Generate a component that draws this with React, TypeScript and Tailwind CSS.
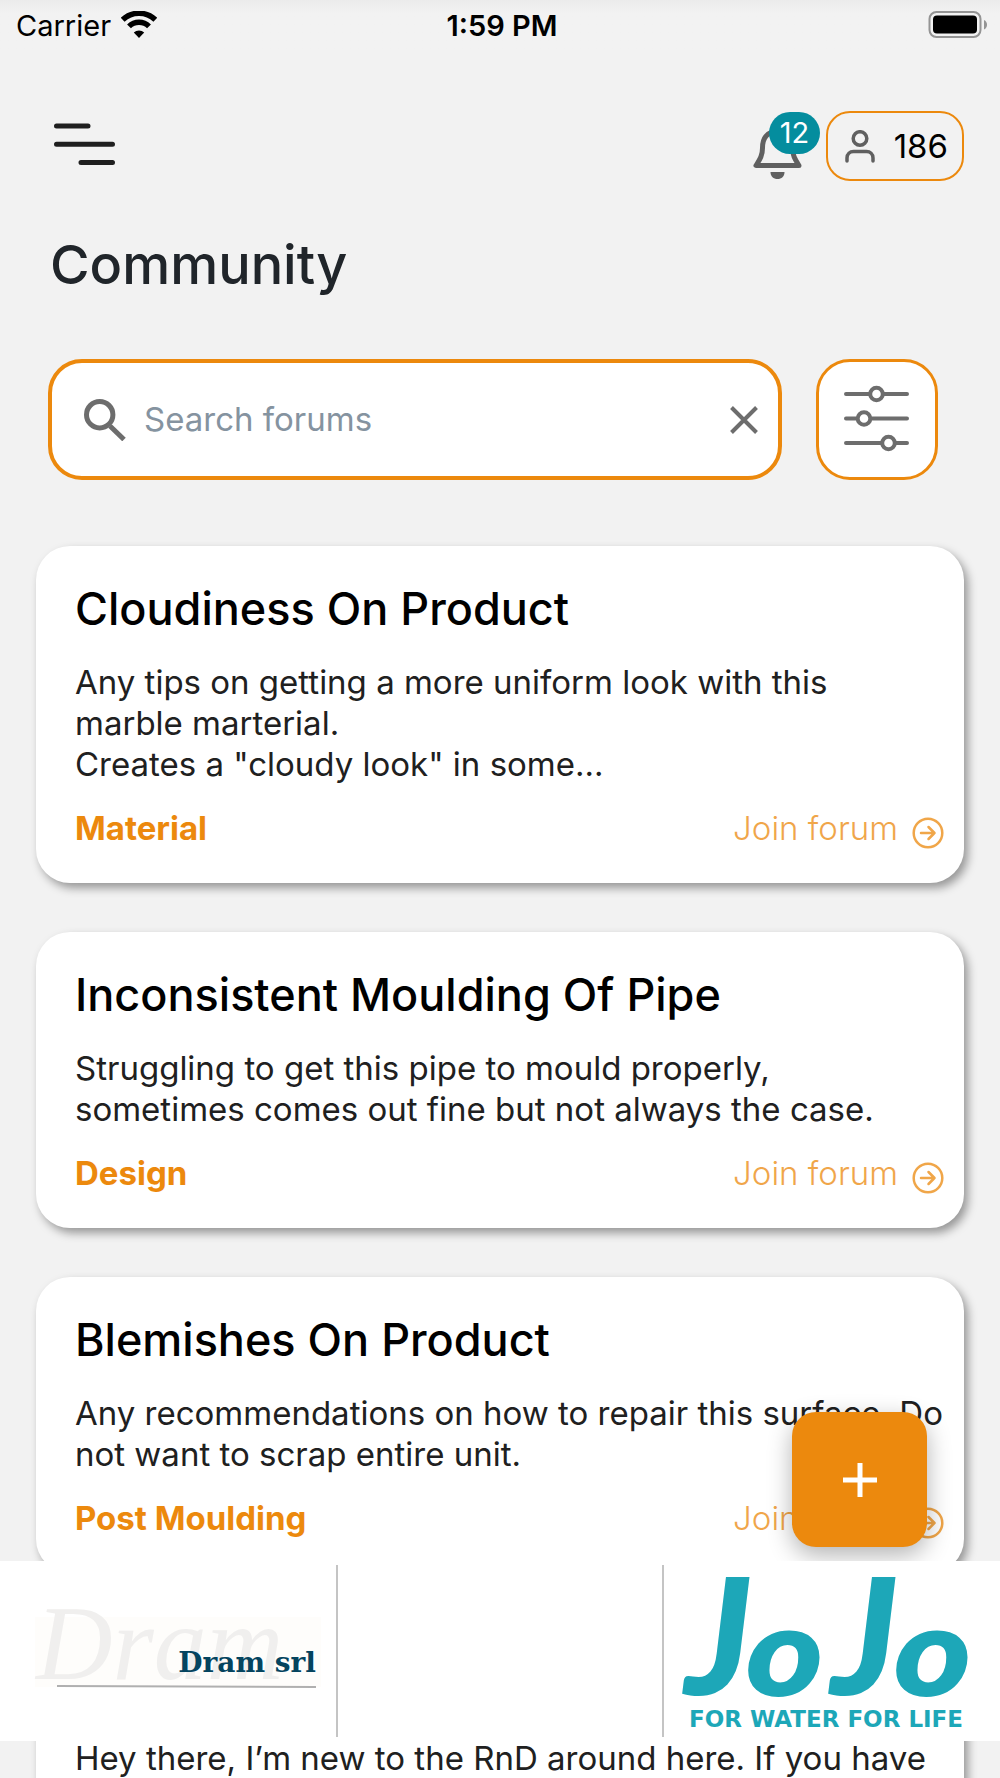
interface Forum {
  id: number;
  title?: string;
  body: string;
  category?: string;
}

const forums: Forum[] = [
  {
    id: 1,
    title: "Cloudiness On Product",
    body: 'Any tips on getting a more uniform look with this\nmarble marterial.\nCreates a "cloudy look" in some...',
    category: "Material",
  },
  {
    id: 2,
    title: "Inconsistent Moulding Of Pipe",
    body: "Struggling to get this pipe to mould properly, sometimes comes out fine but not always the case.",
    category: "Design",
  },
  {
    id: 3,
    title: "Blemishes On Product",
    body: "Any recommendations on how to repair this surface. Do not want to scrap entire unit.",
    category: "Post Moulding",
  },
  {
    id: 4,
    body: "Hey there, I’m new to the RnD around here. If you have",
  },
];

const StatusBar = () => {
  return (
    <div className="grid h-[52px] shrink-0 grid-cols-3 items-center bg-linear-to-b from-[#ebebeb] to-[#f2f2f2] to-25% pr-3 pl-4 text-[29px] leading-8 text-black">
      <div className="flex items-center gap-[10px]">
        <span>Carrier</span>
        <svg width="36" height="27" viewBox="0 0 36 27" className="-mt-1" aria-hidden="true">
          <path d="M1.700 8.800A23.500 23.500 0 0 1 34.300 8.800" fill="none" stroke="#000" strokeWidth="5.500" />
          <path d="M8 15.400A14.300 14.300 0 0 1 28 15.400" fill="none" stroke="#000" strokeWidth="5.500" />
          <path d="M18 27L12.800 21.600A7.600 7.600 0 0 1 23.200 21.600Z" fill="#000" />
        </svg>
      </div>
      <span className="text-center font-semibold">1:59 PM</span>
      <svg width="60" height="28" viewBox="0 0 60 28" className="-mt-0.5 justify-self-end" aria-hidden="true">
        <rect x="1.500" y="1" width="51" height="25" rx="7" fill="none" stroke="#949494" strokeWidth="2" />
        <rect x="5" y="4.500" width="44" height="18" rx="4" fill="#000" />
        <path d="M56 9c4 1.500 4 8 0 9.500z" fill="#949494" />
      </svg>
    </div>
  );
};

const Header = () => {
  return (
    <header className="mt-[59px] flex h-[70px] shrink-0 items-center justify-between pr-9 pl-[54px]">
      <button type="button" aria-label="Menu">
        <svg width="61" height="46" viewBox="0 0 61 46" fill="none" stroke="#1f1f1f" strokeWidth="5" strokeLinecap="round">
          <path d="M2.500 3H34M2.500 21.300H58.500M27 39.500H58.500" />
        </svg>
      </button>
      <div className="flex h-full items-center">
        <button type="button" aria-label="Notifications" className="relative mr-[24px] h-full w-[49px]">
          <svg width="49" height="50" viewBox="0 0 49 50" className="absolute bottom-[2px] left-0">
            <path
              d="M24.500 2.500C14 2.500 9.500 9 9.500 19C9.500 27 6.500 31 3 36.500H46C42.500 31 39.500 27 39.500 19C39.500 9 35 2.500 24.500 2.500Z"
              fill="none"
              stroke="#606060"
              strokeWidth="5"
              strokeLinejoin="round"
            />
            <path d="M17.500 43H31.500C31.500 47.500 28.500 50 24.500 50S17.500 47.500 17.500 43Z" fill="#606060" />
          </svg>
          <span className="absolute top-px left-4 flex h-[42px] w-[51px] items-center justify-center rounded-full bg-[#048d9e] text-[29px] leading-8 text-white">
            12
          </span>
        </button>
        <button
          type="button"
          className="flex h-full w-[138px] items-center justify-between rounded-3xl border-2 border-[#ec890d] pr-[14px] pl-[17px] text-[33px] leading-[41px] text-black"
        >
          <svg width="30" height="33" viewBox="0 0 30 33" fill="none" stroke="#606060" strokeWidth="3.500" strokeLinecap="round">
            <circle cx="15" cy="8.500" r="6.800" />
            <path d="M2 31V28C2 24 5 21.500 8.500 21.500H21.500C25 21.500 28 24 28 28V31" />
          </svg>
          <span>186</span>
        </button>
      </div>
    </header>
  );
};

const SearchRow = () => {
  return (
    <div className="mt-[62px] flex shrink-0 items-center gap-[34px] pr-[62px] pl-12">
      <div className="flex h-[121px] min-w-0 flex-1 items-center rounded-[34px] border-4 border-[#ec890d] bg-white pr-5 pl-8">
        <svg width="42" height="42" viewBox="0 0 42 42" fill="none" stroke="#6d6d6d" strokeWidth="5" aria-hidden="true">
          <circle cx="15.700" cy="15.700" r="13.200" />
          <path d="M26 27L40 40.500" strokeWidth="5" />
        </svg>
        <input
          type="text"
          aria-label="Search forums"
          placeholder="Search forums"
          className="ml-[18px] min-w-0 flex-1 bg-transparent text-[33px] leading-[41px] text-[#202020] outline-none placeholder:text-[#8593a0]"
        />
        <button type="button" aria-label="Clear">
          <svg width="28" height="28" viewBox="0 0 28 28" stroke="#6d6d6d" strokeWidth="4">
            <path d="M1.500 1.500L26.500 26.500M26.500 1.500L1.500 26.500" />
          </svg>
        </button>
      </div>
      <button
        type="button"
        aria-label="Filter"
        className="flex h-[121px] w-[122px] items-center justify-center rounded-[34px] border-3 border-[#ec890d] bg-white"
      >
        <svg width="66" height="70" viewBox="0 0 66 70" fill="#fff" stroke="#6d6d6d" strokeWidth="4" strokeLinecap="round">
          <path d="M2 9H63M2 33.500H63M2 58H63" />
          <circle cx="32.500" cy="9" r="6.300" />
          <circle cx="20" cy="33.500" r="6.300" />
          <circle cx="44.500" cy="58" r="6.300" />
        </svg>
      </button>
    </div>
  );
};

const ForumCard = ({ forum }: { forum: Forum }) => {
  return (
    <article className="rounded-[34px] bg-white pt-[35px] pr-5 pb-[34px] pl-[39px] shadow-[4px_5px_10px_rgba(0,0,0,0.38)]">
      <div className="min-h-14">
        {forum.title && <h2 className="text-[45px] leading-14 font-medium text-black">{forum.title}</h2>}
      </div>
      <p className="mt-[25px] text-[33px] leading-[41px] whitespace-pre-line text-[#202020]">{forum.body}</p>
      {forum.category && (
        <div className="mt-[23px] flex items-center justify-between text-[33px] leading-[41px] text-[#ec890d]">
          <span className="font-bold">{forum.category}</span>
          <a href="#" className="flex items-center gap-[14px] font-light opacity-75">
            Join forum
            <svg width="32" height="32" viewBox="0 0 32 32" fill="none" stroke="currentColor" strokeWidth="2.500" className="mt-2">
              <circle cx="16" cy="16" r="14.300" />
              <path d="M9 16H22.500M16.500 10L22.500 16L16.500 22" strokeLinecap="round" strokeLinejoin="round" />
            </svg>
          </a>
        </div>
      )}
    </article>
  );
};

const DramLogo = () => {
  return (
    <svg width="290" height="96" viewBox="0 0 290 96" role="img" aria-label="Dram srl">
      <rect x="1" y="14" width="286" height="70" fill="#fefdfb" />
      <text x="2" y="76" fontSize="106" fontStyle="italic" fontFamily="Liberation Serif, serif" fill="#f0efee">
        Dram
      </text>
      <text x="282" y="69" textAnchor="end" fontSize="28" fontWeight="700" fontFamily="DejaVu Serif, serif" fill="#04445f">
        Dram srl
      </text>
      <path d="M23 83L282 84" stroke="#b0b0b0" strokeWidth="2" />
    </svg>
  );
};

const JojoLogo = () => {
  return (
    <svg width="300" height="160" viewBox="0 0 300 160" role="img" aria-label="JoJo for water for life">
      <g fill="#1da7b8" fontWeight="700">
        <text x="3" y="124" fontSize="162" fontWeight="900" fontStyle="italic" fontFamily="Lato, sans-serif">
          J
        </text>
        <text x="62" y="124" fontSize="116" fontStyle="italic" fontFamily="DejaVu Sans, sans-serif">
          o
        </text>
        <text x="149" y="124" fontSize="162" fontWeight="900" fontStyle="italic" fontFamily="Lato, sans-serif">
          J
        </text>
        <text x="210" y="124" fontSize="116" fontStyle="italic" fontFamily="DejaVu Sans, sans-serif">
          o
        </text>
        <text x="144" y="156" textAnchor="middle" fontSize="23" fontFamily="DejaVu Sans, sans-serif">
          FOR WATER FOR LIFE
        </text>
      </g>
    </svg>
  );
};

const SponsorBanner = () => {
  return (
    <div className="absolute inset-x-0 bottom-[37px] grid h-[180px] grid-cols-[338fr_326fr_336fr] bg-white py-1">
      <div className="flex items-center justify-end border-r-2 border-[#c4c4c4] pr-3">
        <DramLogo />
      </div>
      <div className="border-r-2 border-[#c4c4c4]" />
      <div className="flex items-center justify-center">
        <JojoLogo />
      </div>
    </div>
  );
};

const App = () => {
  return (
    <div className="relative flex h-screen flex-col overflow-hidden bg-[#f2f2f2] font-[Inter,sans-serif]">
      <StatusBar />
      <Header />
      <h1 className="mt-[52px] shrink-0 pl-[50px] text-[54px] leading-16 font-medium text-[#20252a]">Community</h1>
      <SearchRow />
      <main className="flex min-h-0 flex-1 flex-col gap-[49px] overflow-y-auto px-9 pt-[66px] [scrollbar-width:none]">
        {forums.map((forum) => (
          <ForumCard key={forum.id} forum={forum} />
        ))}
      </main>
      <button
        type="button"
        aria-label="New forum"
        className="absolute right-[73px] bottom-[231px] flex h-[135px] w-[135px] items-center justify-center rounded-3xl bg-[#ec890d] shadow-[0_8px_24px_rgba(0,0,0,0.3)]"
      >
        <svg width="34" height="34" viewBox="0 0 34 34" stroke="#fff" strokeWidth="5">
          <path d="M17 0V34M0 17H34" />
        </svg>
      </button>
      <SponsorBanner />
    </div>
  );
};

export default App;
